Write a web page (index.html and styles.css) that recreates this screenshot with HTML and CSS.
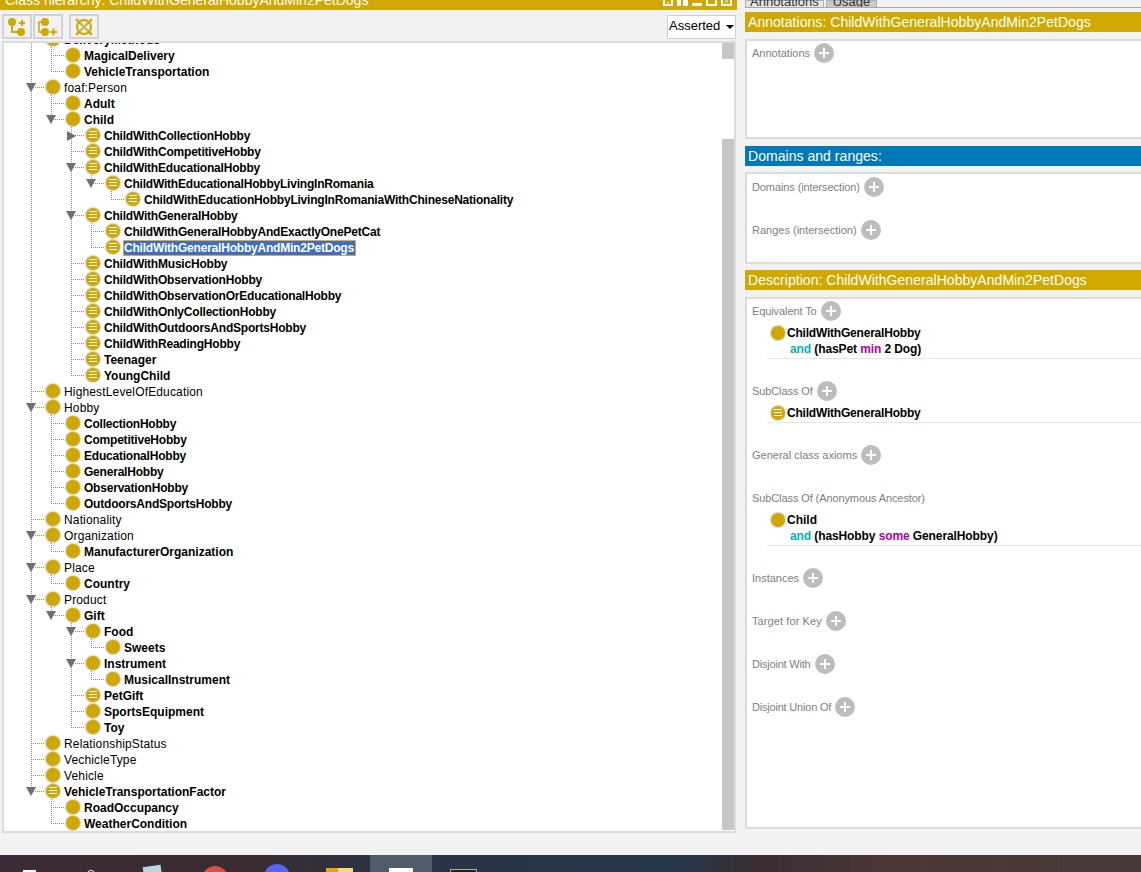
FILE: index.html
```html
<!DOCTYPE html>
<html lang="en">
<head>
    <meta charset="UTF-8">
    <title>Class hierarchy</title>
    <link rel="stylesheet" href="styles.css">
</head>
<body>
<div class="app">
    <div class="main">

        <!-- Left: class hierarchy -->
        <section class="left">
            <div class="view-title">
                <span class="view-title-text">Class hierarchy: ChildWithGeneralHobbyAndMin2PetDogs</span>
                <div class="view-btns">
                    <svg width="10" height="6" viewBox="0 0 10 6"><path d="M1 0V5H9V0" fill="none" stroke="#fff" stroke-width="2"/><rect x="4" y="2" width="2" height="1" fill="#fff"/></svg>
                    <svg width="11" height="6" viewBox="0 0 11 6"><rect x="0" y="0" width="4" height="6" fill="#fff"/><rect x="6" y="0" width="5" height="6" fill="#fff"/></svg>
                    <svg width="10" height="6" viewBox="0 0 10 6"><rect x="0" y="3" width="10" height="3" fill="#fff"/></svg>
                    <svg width="11" height="6" viewBox="0 0 11 6"><path d="M1 0V5H10V0" fill="none" stroke="#fff" stroke-width="2"/></svg>
                    <svg width="11" height="6" viewBox="0 0 11 6"><path d="M1 0V5H10V0" fill="none" stroke="#fff" stroke-width="2"/><path d="M4 0L7 3M7 0L4 3" stroke="#fff" stroke-width="1"/></svg>
                </div>
            </div>
            <div class="toolbar">
                <button class="tool">
                    <svg width="26" height="20" viewBox="0 0 26 20"><path d="M8 6V15H16" fill="none" stroke="#d0a800" stroke-width="2"/><circle cx="8" cy="5" r="4" fill="#d0a800"/><circle cx="17" cy="15" r="4" fill="#d0a800"/><path d="M15 6h6M18 3v6" stroke="#d0a800" stroke-width="2"/></svg>
                </button>
                <button class="tool">
                    <svg width="26" height="20" viewBox="0 0 26 20"><path d="M9 5H4V15H9" fill="none" stroke="#d0a800" stroke-width="1.5"/><circle cx="10" cy="5" r="4" fill="#d0a800"/><circle cx="10" cy="15" r="4" fill="#d0a800"/><path d="M15 15h7M18.5 11.5v7" stroke="#d0a800" stroke-width="2"/></svg>
                </button>
                <button class="tool tool-del">
                    <svg width="24" height="20" viewBox="0 0 24 20"><circle cx="12" cy="10" r="7" fill="none" stroke="#d0a800" stroke-width="2"/><path d="M4 2L20 18M20 2L4 18" stroke="#d0a800" stroke-width="2"/><path d="M8 6l8 8M16 6l-8 8" stroke="#b9b9b9" stroke-width="1"/></svg>
                </button>
                <div class="asserted">Asserted<span class="caret"></span></div>
            </div>

            <div class="tree-box">
                <div class="tree">
                    <div class="row"><i class="g t"></i><span class="ico"></span><span class="name b">DeliveryMethods</span></div>
                    <div class="row"><i class="g p"></i><i class="g t"></i><span class="ico"></span><span class="name b">MagicalDelivery</span></div>
                    <div class="row"><i class="g p"></i><i class="g e"></i><span class="ico"></span><span class="name b">VehicleTransportation</span></div>
                    <div class="row"><i class="g t"><b class="dn"></b></i><span class="ico"></span><span class="name">foaf:Person</span></div>
                    <div class="row"><i class="g p"></i><i class="g t"></i><span class="ico"></span><span class="name b">Adult</span></div>
                    <div class="row"><i class="g p"></i><i class="g e"><b class="dn"></b></i><span class="ico"></span><span class="name b">Child</span></div>
                    <div class="row"><i class="g p"></i><i class="g"></i><i class="g t"><b class="rt"></b></i><span class="ico def"></span><span class="name b hb">ChildWithCollectionHobby</span></div>
                    <div class="row"><i class="g p"></i><i class="g"></i><i class="g t"></i><span class="ico def"></span><span class="name b hb">ChildWithCompetitiveHobby</span></div>
                    <div class="row"><i class="g p"></i><i class="g"></i><i class="g t"><b class="dn"></b></i><span class="ico def"></span><span class="name b hb">ChildWithEducationalHobby</span></div>
                    <div class="row"><i class="g p"></i><i class="g"></i><i class="g p"></i><i class="g e"><b class="dn"></b></i><span class="ico def"></span><span class="name b hb">ChildWithEducationalHobbyLivingInRomania</span></div>
                    <div class="row"><i class="g p"></i><i class="g"></i><i class="g p"></i><i class="g"></i><i class="g e"></i><span class="ico def"></span><span class="name b hb">ChildWithEducationHobbyLivingInRomaniaWithChineseNationality</span></div>
                    <div class="row"><i class="g p"></i><i class="g"></i><i class="g t"><b class="dn"></b></i><span class="ico def"></span><span class="name b hb">ChildWithGeneralHobby</span></div>
                    <div class="row"><i class="g p"></i><i class="g"></i><i class="g p"></i><i class="g t"></i><span class="ico def"></span><span class="name b hb">ChildWithGeneralHobbyAndExactlyOnePetCat</span></div>
                    <div class="row"><i class="g p"></i><i class="g"></i><i class="g p"></i><i class="g e"></i><span class="ico def"></span><span class="name b hb sel">ChildWithGeneralHobbyAndMin2PetDogs</span></div>
                    <div class="row"><i class="g p"></i><i class="g"></i><i class="g t"></i><span class="ico def"></span><span class="name b hb">ChildWithMusicHobby</span></div>
                    <div class="row"><i class="g p"></i><i class="g"></i><i class="g t"></i><span class="ico def"></span><span class="name b hb">ChildWithObservationHobby</span></div>
                    <div class="row"><i class="g p"></i><i class="g"></i><i class="g t"></i><span class="ico def"></span><span class="name b hb">ChildWithObservationOrEducationalHobby</span></div>
                    <div class="row"><i class="g p"></i><i class="g"></i><i class="g t"></i><span class="ico def"></span><span class="name b hb">ChildWithOnlyCollectionHobby</span></div>
                    <div class="row"><i class="g p"></i><i class="g"></i><i class="g t"></i><span class="ico def"></span><span class="name b hb">ChildWithOutdoorsAndSportsHobby</span></div>
                    <div class="row"><i class="g p"></i><i class="g"></i><i class="g t"></i><span class="ico def"></span><span class="name b hb">ChildWithReadingHobby</span></div>
                    <div class="row"><i class="g p"></i><i class="g"></i><i class="g t"></i><span class="ico def"></span><span class="name b">Teenager</span></div>
                    <div class="row"><i class="g p"></i><i class="g"></i><i class="g e"></i><span class="ico def"></span><span class="name b">YoungChild</span></div>
                    <div class="row"><i class="g t"></i><span class="ico"></span><span class="name">HighestLevelOfEducation</span></div>
                    <div class="row"><i class="g t"><b class="dn"></b></i><span class="ico"></span><span class="name">Hobby</span></div>
                    <div class="row"><i class="g p"></i><i class="g t"></i><span class="ico"></span><span class="name b hb">CollectionHobby</span></div>
                    <div class="row"><i class="g p"></i><i class="g t"></i><span class="ico"></span><span class="name b hb">CompetitiveHobby</span></div>
                    <div class="row"><i class="g p"></i><i class="g t"></i><span class="ico"></span><span class="name b hb">EducationalHobby</span></div>
                    <div class="row"><i class="g p"></i><i class="g t"></i><span class="ico"></span><span class="name b hb">GeneralHobby</span></div>
                    <div class="row"><i class="g p"></i><i class="g t"></i><span class="ico"></span><span class="name b hb">ObservationHobby</span></div>
                    <div class="row"><i class="g p"></i><i class="g e"></i><span class="ico"></span><span class="name b hb">OutdoorsAndSportsHobby</span></div>
                    <div class="row"><i class="g t"></i><span class="ico"></span><span class="name">Nationality</span></div>
                    <div class="row"><i class="g t"><b class="dn"></b></i><span class="ico"></span><span class="name">Organization</span></div>
                    <div class="row"><i class="g p"></i><i class="g e"></i><span class="ico"></span><span class="name b">ManufacturerOrganization</span></div>
                    <div class="row"><i class="g t"><b class="dn"></b></i><span class="ico"></span><span class="name">Place</span></div>
                    <div class="row"><i class="g p"></i><i class="g e"></i><span class="ico"></span><span class="name b">Country</span></div>
                    <div class="row"><i class="g t"><b class="dn"></b></i><span class="ico"></span><span class="name">Product</span></div>
                    <div class="row"><i class="g p"></i><i class="g e"><b class="dn"></b></i><span class="ico"></span><span class="name b">Gift</span></div>
                    <div class="row"><i class="g p"></i><i class="g"></i><i class="g t"><b class="dn"></b></i><span class="ico"></span><span class="name b">Food</span></div>
                    <div class="row"><i class="g p"></i><i class="g"></i><i class="g p"></i><i class="g e"></i><span class="ico"></span><span class="name b">Sweets</span></div>
                    <div class="row"><i class="g p"></i><i class="g"></i><i class="g t"><b class="dn"></b></i><span class="ico"></span><span class="name b">Instrument</span></div>
                    <div class="row"><i class="g p"></i><i class="g"></i><i class="g p"></i><i class="g e"></i><span class="ico"></span><span class="name b">MusicalInstrument</span></div>
                    <div class="row"><i class="g p"></i><i class="g"></i><i class="g t"></i><span class="ico def"></span><span class="name b">PetGift</span></div>
                    <div class="row"><i class="g p"></i><i class="g"></i><i class="g t"></i><span class="ico"></span><span class="name b">SportsEquipment</span></div>
                    <div class="row"><i class="g p"></i><i class="g"></i><i class="g e"></i><span class="ico"></span><span class="name b">Toy</span></div>
                    <div class="row"><i class="g t"></i><span class="ico"></span><span class="name">RelationshipStatus</span></div>
                    <div class="row"><i class="g t"></i><span class="ico"></span><span class="name">VechicleType</span></div>
                    <div class="row"><i class="g t"></i><span class="ico"></span><span class="name">Vehicle</span></div>
                    <div class="row"><i class="g e"><b class="dn"></b></i><span class="ico def"></span><span class="name b">VehicleTransportationFactor</span></div>
                    <div class="row"><i class="g"></i><i class="g t"></i><span class="ico"></span><span class="name b">RoadOccupancy</span></div>
                    <div class="row"><i class="g"></i><i class="g e"></i><span class="ico"></span><span class="name b">WeatherCondition</span></div>
                </div>
                <div class="scroll">
                    <div class="thumb-top"></div>
                    <div class="thumb"></div>
                </div>
            </div>
        </section>

        <!-- Right: annotations, domains and description -->
        <section class="right">
            <div class="tabs">
                <span class="tab active">Annotations</span>
                <span class="tab">Usage</span>
            </div>

            <h3 class="bar">Annotations: ChildWithGeneralHobbyAndMin2PetDogs</h3>
            <div class="box box-ann">
                <div class="sec"><div class="label flat">Annotations<span class="plus"></span></div></div>
            </div>

            <h3 class="bar blue">Domains and ranges:</h3>
            <div class="box box-dom">
                <div class="sec"><div class="label">Domains (intersection)<span class="plus"></span></div></div>
                <div class="sec"><div class="label flat">Ranges (intersection)<span class="plus"></span></div></div>
            </div>

            <h3 class="bar bar-desc">Description: ChildWithGeneralHobbyAndMin2PetDogs</h3>
            <div class="box box-desc">
                <div class="sec">
                    <div class="label">Equivalent To<span class="plus"></span></div>
                    <div class="item">
                        <div class="line hb"><span class="ico"></span>ChildWithGeneralHobby</div>
                        <div class="line sub"><span class="kw-and">and</span> (hasPet <span class="kw-q">min</span> 2 Dog)</div>
                    </div>
                </div>
                <div class="sec">
                    <div class="label">SubClass Of<span class="plus"></span></div>
                    <div class="item">
                        <div class="line hb"><span class="ico def"></span>ChildWithGeneralHobby</div>
                    </div>
                </div>
                <div class="sec"><div class="label flat">General class axioms<span class="plus"></span></div></div>
                <div class="sec">
                    <div class="label">SubClass Of (Anonymous Ancestor)</div>
                    <div class="item">
                        <div class="line"><span class="ico"></span>Child</div>
                        <div class="line sub"><span class="kw-and">and</span> (hasHobby <span class="kw-q">some</span> GeneralHobby)</div>
                    </div>
                </div>
                <div class="sec"><div class="label flat">Instances<span class="plus"></span></div></div>
                <div class="sec"><div class="label wide">Target for Key<span class="plus"></span></div></div>
                <div class="sec"><div class="label narrow">Disjoint With<span class="plus"></span></div></div>
                <div class="sec"><div class="label narrow">Disjoint Union Of<span class="plus"></span></div></div>
            </div>
        </section>
    </div>

    <!-- Windows taskbar, cut off by the bottom of the window -->
    <footer class="taskbar">
        <div class="task"><span class="t-win"></span></div>
        <div class="task"><span class="t-search"></span></div>
        <div class="task"><span class="t-note"></span></div>
        <div class="task"><span class="t-red"></span></div>
        <div class="task"><span class="t-blue"></span></div>
        <div class="task"><span class="t-folder"></span></div>
        <div class="task on"><span class="t-doc"></span></div>
        <div class="task"><span class="t-screen"></span></div>
    </footer>
</div>
</body>
</html>
```

FILE: styles.css
```css
/* General */
* {
    box-sizing: border-box;
}
body {
    margin: 0;
    font-family: "Liberation Sans", Arial, sans-serif;
    font-size: 12px;
    background-color: #f2f2f2;
    color: #000;
}
.app {
    height: 872px;
    overflow: hidden;
    display: flex;
    flex-direction: column;
}
.main {
    height: 855px;
    display: flex;
}

/* Left panel */
.left {
    width: 737px;
    margin-right: 8px;
    flex-shrink: 0;
}
.view-title {
    height: 10px;
    background-color: #d0a800;
    color: #fff;
    overflow: hidden;
    display: flex;
    justify-content: space-between;
    padding: 0 5px;
}
.view-title-text {
    font-size: 14px;
    line-height: 16px;
    margin-top: -8px;
    white-space: nowrap;
}
.view-btns {
    display: flex;
    gap: 4px;
    align-items: flex-start;
}

/* Toolbar */
.toolbar {
    height: 31px;
    padding: 4px 1px 0 2px;
    display: flex;
    align-items: flex-start;
}
.tool {
    width: 30px;
    height: 25px;
    padding: 0;
    display: flex;
    align-items: center;
    justify-content: center;
    background-color: #f2f2f2;
    border: 2px solid #d2d2d2;
}
.tool + .tool {
    margin-left: 1px;
}
.tool + .tool-del {
    margin-left: 6px;
}
.asserted {
    width: 69px;
    height: 24px;
    margin-left: auto;
    margin-top: 1px;
    padding: 0 0 3px 1px;
    background-color: #fff;
    border: 1px solid #cfcfcf;
    font-size: 13px;
    display: flex;
    align-items: center;
}
.caret {
    margin: 2px 0 0 6px;
    border-left: 4px solid transparent;
    border-right: 4px solid transparent;
    border-top: 4px solid #000;
}

/* Tree */
.tree-box {
    height: 792px;
    margin-left: 2px;
    margin-right: 1px;
    background-color: #fff;
    border: 2px solid #dcdcdc;
    display: flex;
    overflow: hidden;
}
.tree {
    flex: 1;
    margin-top: -12px;
    padding-left: 17px;
    overflow: hidden;
}
.row {
    height: 16px;
    display: flex;
    align-items: center;
    white-space: nowrap;
}
.g {
    position: relative;
    width: 20px;
    height: 16px;
    flex-shrink: 0;
}
/* vertical guide */
.g.p::before,
.g.t::before,
.g.e::before {
    content: "";
    position: absolute;
    left: 10px;
    top: 0;
    width: 1px;
    height: 16px;
    background-image: repeating-linear-gradient(#8a8a8a 0 1px, transparent 1px 2px);
}
.g.e::before {
    height: 9px;
}
/* horizontal guide */
.g.t::after,
.g.e::after {
    content: "";
    position: absolute;
    left: 10px;
    top: 8px;
    width: 14px;
    height: 1px;
    background-image: repeating-linear-gradient(90deg, #8a8a8a 0 1px, transparent 1px 2px);
}
/* expand handles, drawn over the guides */
.dn,
.rt {
    position: absolute;
    left: 5px;
    top: 4px;
    z-index: 1;
    width: 0;
    height: 0;
}
.dn {
    border-left: 5px solid transparent;
    border-right: 5px solid transparent;
    border-top: 9px solid #707070;
}
.rt {
    left: 6px;
    border-top: 5px solid transparent;
    border-bottom: 5px solid transparent;
    border-left: 9px solid #707070;
}
.ico {
    position: relative;
    width: 14px;
    height: 14px;
    margin-left: 5px;
    flex-shrink: 0;
    display: inline-block;
    border-radius: 50%;
    background-color: #d0a800;
    box-shadow: 0 0 1px 1px rgba(170, 170, 170, 0.5);
}
.ico.def::after {
    content: "";
    position: absolute;
    left: 3px;
    top: 3px;
    width: 8px;
    height: 7px;
    background-image: repeating-linear-gradient(#fff 0 1px, transparent 1px 3px);
}
.name {
    margin: 2px 0 0 4px;
    line-height: 16px;
    letter-spacing: 0.15px;
}
.b {
    font-weight: bold;
    letter-spacing: 0;
}
/* the hinted bold of the original sets these names a bit narrower */
.hb {
    letter-spacing: -0.21px;
}
.sel {
    margin-left: 3px;
    height: 16px;
    padding: 0 1px 0 0;
    line-height: 14px;
    color: #fff;
    background-color: #3a6fc8;
    border: 1px solid #e8a53c;
}

/* Scrollbar */
.scroll {
    width: 12px;
    flex-shrink: 0;
}
.thumb-top {
    height: 16px;
    background-color: #c6c6c6;
}
.thumb {
    height: 691px;
    margin-top: 80px;
    background-color: #c6c6c6;
}

/* Right panel */
.right {
    flex: 1;
    min-width: 0;
}
.tabs {
    height: 8px;
    border-bottom: 1px solid #a8a8a8;
    display: flex;
    overflow: hidden;
}
.tab {
    height: 8px;
    padding: 0 6px;
    font-size: 13px;
    line-height: 2px;
    background-color: #c9c9c9;
    border: 1px solid #b0b0b0;
    color: #333;
}
.tab.active {
    padding: 0 4px;
    margin-right: 2px;
    background-color: #e6e6e6;
}
.bar {
    height: 20px;
    margin: 4px 0 0;
    padding-left: 3px;
    background-color: #d0a800;
    color: #fff;
    font-size: 14px;
    font-weight: normal;
    line-height: 20px;
    letter-spacing: 0.04px;
    white-space: nowrap;
}
.bar.blue {
    margin-top: 0;
    background-color: #0079ba;
}
.bar.bar-desc {
    margin-top: 0;
}
.box {
    margin-top: 7px;
    padding: 2px 0 2px 5px;
    background-color: #fff;
    border: 2px solid #dcdcdc;
    border-right: 0;
}
.box-ann {
    height: 100px;
    margin-bottom: 7px;
}
.box-dom {
    height: 92px;
    margin-top: 6px;
    margin-bottom: 6px;
    padding-top: 3px;
}
.box-desc {
    height: 532px;
}
.sec {
    margin-bottom: 23px;
}
.label {
    height: 20px;
    display: flex;
    align-items: center;
    font-size: 11px;
    letter-spacing: -0.1px;
    color: #808080;
}
.label.flat {
    letter-spacing: 0;
}
.label.wide {
    letter-spacing: 0.1px;
}
.label.narrow {
    letter-spacing: -0.2px;
}
.plus {
    position: relative;
    width: 20px;
    height: 20px;
    margin-left: 4px;
    border-radius: 50%;
    background-color: #bdbdbd;
}
.plus::before,
.plus::after {
    content: "";
    position: absolute;
    background-color: #fff;
}
.plus::before {
    left: 5px;
    top: 9px;
    width: 10px;
    height: 2px;
}
.plus::after {
    left: 9px;
    top: 5px;
    width: 2px;
    height: 10px;
}
.item {
    margin: 4px 0 -1px 15px;
    padding-bottom: 1px;
    border-bottom: 1px solid #e6e6e6;
}
.line {
    height: 16px;
    display: flex;
    align-items: center;
    font-weight: bold;
    white-space: pre;
    padding-left: 4px;
}
.line .ico {
    margin: 0 2px 0 0;
}
.line.sub {
    padding-left: 23px;
    letter-spacing: -0.1px;
}
.kw-and {
    color: #00b5b5;
}
.kw-q {
    color: #b000b0;
}

/* Taskbar */
.taskbar {
    height: 17px;
    display: flex;
    margin-left: -2px;
    overflow: hidden;
    background: linear-gradient(90deg, #3b2b38 0, #3a2b30 250px, #2a3445 400px, #26374a 680px, #3a2e33 760px, #4a3835 900px, #463a38 1141px);
}
.task {
    width: 62px;
    height: 17px;
    display: flex;
    justify-content: center;
    overflow: hidden;
}
.task.on {
    background-color: #525c68;
}
.t-win {
    width: 13px;
    height: 10px;
    margin-top: 15px;
    background-color: #fff;
}
.t-search {
    width: 10px;
    height: 10px;
    margin-top: 15px;
    border: 1px solid #fff;
    border-radius: 50%;
}
.t-note {
    width: 18px;
    height: 20px;
    margin-top: 11px;
    background-color: #b8d8de;
    transform: rotate(-8deg);
}
.t-red {
    width: 26px;
    height: 26px;
    margin-top: 11px;
    border-radius: 50%;
    background-color: #dc4e41;
}
.t-blue {
    width: 26px;
    height: 26px;
    margin-top: 9px;
    border-radius: 50%;
    background-color: #5865f2;
}
.t-folder {
    width: 27px;
    height: 14px;
    margin-top: 13px;
    background: linear-gradient(90deg, #e5a50a 0 12px, #f5d97a 12px);
}
.t-doc {
    width: 24px;
    height: 14px;
    margin-top: 13px;
    background-color: #fff;
}
.t-screen {
    width: 27px;
    height: 14px;
    margin-top: 14px;
    background-color: #222;
    border: 1px solid #aaa;
}
```
